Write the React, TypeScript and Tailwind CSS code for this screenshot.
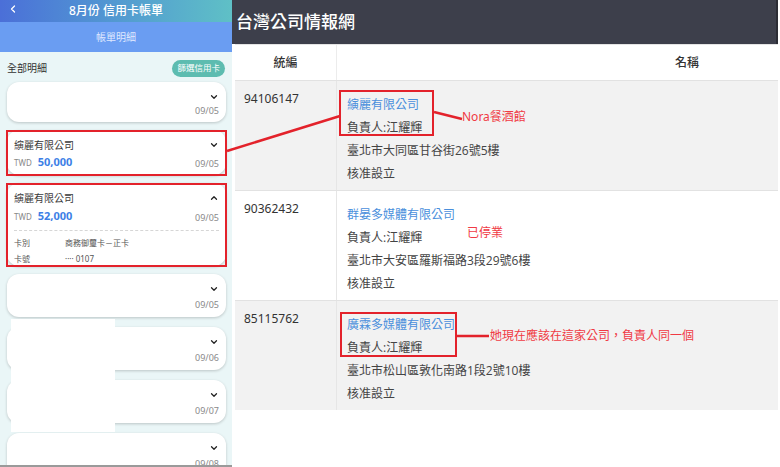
import { ChevronDown, ChevronUp, ChevronLeft } from 'lucide-react';

const font = { fontFamily: '"Noto Sans", "Noto Sans CJK TC", sans-serif' };

type Bill = { name?: string; amount?: string; date: string; h: string; open?: boolean; pb?: string };

const bills: Bill[] = [
  { date: '09/05', h: 'h-[40px]' },
  { name: '縯麗有限公司', amount: '50,000', date: '09/05', h: 'h-[45px]' },
  { name: '縯麗有限公司', amount: '52,000', date: '09/05', h: 'h-[83px]', open: true },
  { date: '09/05', h: 'h-[43px] mb-[2px]', pb: 'pb-[6px]' },
  { date: '09/06', h: 'h-[43px] mb-[2px]', pb: 'pb-[6px]' },
  { date: '09/07', h: 'h-[43px] mb-[2px]', pb: 'pb-[6px]' },
  { date: '09/08', h: 'h-[43px] mb-[2px]', pb: 'pb-[6px]' },
];

function BillCard({ b }: { b: Bill }) {
  return (
    <div className={`${b.h} shrink-0 bg-white rounded-xl shadow-[0_1px_3px_rgba(0,0,0,0.2)] px-[7px] pt-[8px] flex flex-col`}>
      <div className="flex items-center justify-between h-[14px]">
        <span className="text-[10px] text-[#3a3a3a]">{b.name ?? ''}</span>
        {b.open ? <ChevronUp className="w-[10px] h-[10px] text-[#222]" strokeWidth={3} /> : <ChevronDown className="w-[10px] h-[10px] text-[#222]" strokeWidth={3} />}
      </div>
      <div className={`flex items-end justify-between mt-auto ${b.pb ?? 'pb-[4px] mb-px'}`} style={b.open ? { marginTop: 3 } : undefined}>
        <div className="flex items-baseline gap-[6px]">
          {b.amount && (
            <>
              <span className="text-[8px] text-[#888]">TWD</span>
              <span className="text-[11px] font-bold text-[#3d7fe6]">{b.amount}</span>
            </>
          )}
        </div>
        <span className="text-[9px] text-[#8a8a8a]">{b.date}</span>
      </div>
      {b.open && (
        <div className="border-t border-dashed border-[#d6d6d6] pt-[4px] pb-[6px] mb-auto">
          <div className="flex text-[8px] text-[#555] h-[16px] items-center">
            <span className="w-[51px]">卡別</span>
            <span>商務御璽卡－正卡</span>
          </div>
          <div className="flex text-[8px] text-[#555] h-[16px] items-center">
            <span className="w-[51px]">卡號</span>
            <span>···· 0107</span>
          </div>
        </div>
      )}
    </div>
  );
}

type Company = { id: string; name: string; addr: string };

const companies: Company[] = [
  { id: '94106147', name: '縯麗有限公司', addr: '臺北市大同區甘谷街26號5樓' },
  { id: '90362432', name: '群晏多媒體有限公司', addr: '臺北市大安區羅斯福路3段29號6樓' },
  { id: '85115762', name: '廣霖多媒體有限公司', addr: '臺北市松山區敦化南路1段2號10樓' },
];

export default function App() {
  return (
    <div className="relative w-[780px] h-[467px] overflow-hidden bg-white flex" style={font}>
      {/* mobile bill view */}
      <div className="w-[232px] h-[467px] shrink-0 bg-[#eaf6f7] flex flex-col border-b-2 border-[#9a9a9a] overflow-hidden">
        <div className="h-[22px] shrink-0 bg-gradient-to-r from-[#4b6fd8] to-[#5fc0c6] relative flex items-center justify-center">
          <ChevronLeft className="absolute left-[7px] top-[3px] w-[12px] h-[12px] text-white" strokeWidth={2.5} />
          <span className="text-[12px] font-medium text-white">8月份 信用卡帳單</span>
        </div>
        <div className="h-[30px] shrink-0 bg-[#6a9df2] flex items-center justify-center">
          <span className="text-[10px] text-[#dfe8ff]">帳單明細</span>
        </div>
        <div className="flex items-center justify-between px-[7px] pt-[8px] pb-[5px]">
          <span className="text-[10px] text-[#333]">全部明細</span>
          <span className="h-[17px] px-[5px] rounded-full bg-[#5dbcb0] text-white text-[8.5px] flex items-center">篩選信用卡</span>
        </div>
        <div className="flex flex-col gap-[8px] px-[7px] pr-[6px]">
          {bills.map((b, i) => (
            <BillCard key={i} b={b} />
          ))}
        </div>
      </div>

      {/* company info site */}
      <div className="flex-1 flex flex-col">
        <div className="h-[44px] shrink-0 bg-[#3d3f4b] border-r-2 border-[#2c2d35] flex items-center pl-[4px] mr-[2px]">
          <span className="text-[17px] font-medium text-white">台灣公司情報網</span>
        </div>
        <div className="ml-[3px] mr-[2px] border-t border-[#e4e4e4]">
          <div className="flex h-[35px] items-center text-[12px] text-[#333] font-medium bg-white">
            <div className="w-[102px] text-center border-r border-[#ececec] h-full flex items-center justify-center">統編</div>
            <div className="flex-1 h-full flex items-center pl-[338px]">名稱</div>
          </div>
          {companies.map((c, i) => (
            <div key={c.id} className={`flex h-[110px] border-t border-[#e2e2e2] ${i % 2 === 0 ? 'bg-[#f2f2f2]' : 'bg-white'}`}>
              <div className="w-[102px] border-r border-[#e6e6e6] pl-[9px] pt-[9px] text-[12px] text-[#333]">{c.id}</div>
              <div className="flex-1 pl-[10px] pt-[12px] text-[12px] text-[#444] leading-[23px]" style={{ fontFamily: '"Open Sans", "Noto Sans CJK TC", sans-serif' }}>
                <div className="text-[#4a8fdc]">{c.name}</div>
                <div>負責人:江耀輝</div>
                <div>{c.addr}</div>
                <div>核准設立</div>
              </div>
            </div>
          ))}
        </div>
      </div>

      {/* redaction block */}
      <div className="absolute left-[11px] top-[319px] w-[104px] h-[113px] bg-white" />

      {/* annotations */}
      <div className="absolute left-[6px] top-[130px] w-[221px] h-[46px] border-2 border-[#e3222b]" />
      <div className="absolute left-[6px] top-[183px] w-[221px] h-[84px] border-2 border-[#e3222b]" />
      <div className="absolute left-[339px] top-[90px] w-[95px] h-[46px] border-2 border-[#e3222b]" />
      <div className="absolute left-[340px] top-[312px] w-[117px] h-[45px] border-2 border-[#e3222b]" />
      <svg className="absolute left-0 top-0 pointer-events-none" width="780" height="467">
        <line x1="227" y1="151" x2="340" y2="116" stroke="#e3222b" strokeWidth="2.5" />
        <line x1="434" y1="112" x2="462" y2="119" stroke="#e3222b" strokeWidth="2.5" />
        <line x1="456" y1="336" x2="489" y2="336" stroke="#e3222b" strokeWidth="2.5" />
      </svg>
      <span className="absolute left-[462px] top-[108px] text-[12px] text-[#f03a44]" style={font}>Nora餐酒館</span>
      <span className="absolute left-[467px] top-[224px] text-[12px] text-[#f03a44]">已停業</span>
      <span className="absolute left-[490px] top-[327px] text-[12px] text-[#f03a44]">她現在應該在這家公司，負責人同一個</span>
    </div>
  );
}
